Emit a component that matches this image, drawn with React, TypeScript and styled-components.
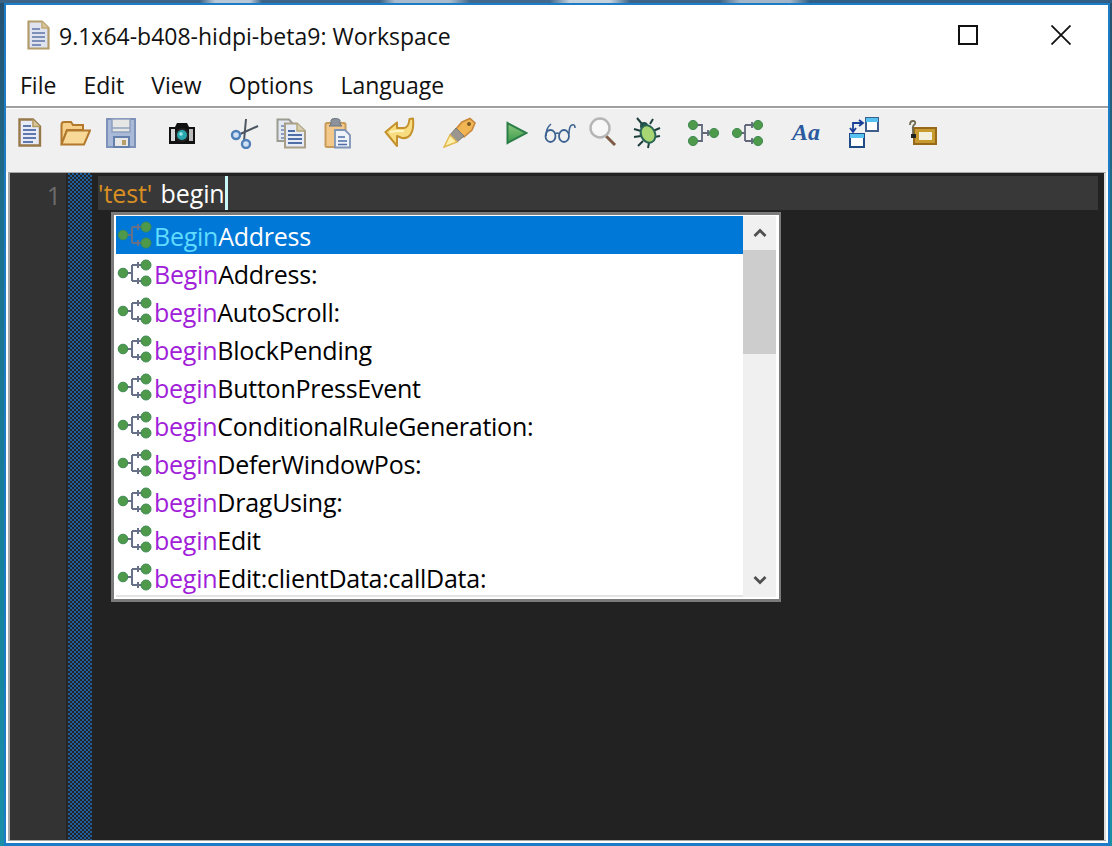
import React from "react";
import styled, { createGlobalStyle } from "styled-components";

const GlobalStyle = createGlobalStyle`
    html, body {
        margin: 0;
        padding: 0;
    }
    body {
        width: 1112px;
        height: 846px;
        overflow: hidden;
        font-family: "Open Sans", "Noto Sans", sans-serif;
    }
`;

const Desktop = styled.div`
    width: 1112px;
    height: 846px;
    box-sizing: border-box;
    padding: 3px 2px 0 4px;
    background:
        linear-gradient(90deg, #3c6488 0 200px, #b9c8d6 215px 250px, #3c6488 262px 380px, #a9bccd 395px 450px, #41698d 470px 550px, #c4d2de 570px 610px, #3c6488 630px 720px, #a2b6c8 740px 790px, #2f5f86 810px 100%) top / 100% 3px no-repeat,
        linear-gradient(180deg, #27506f 0%, #1d6f8c 25%, #16839c 70%, #1a8fa8 100%);
`;

const Win = styled.div`
    height: 843px;
    box-sizing: border-box;
    border: solid #1c7cc6;
    border-width: 2px 2px 3px 2px;
    background: #fff;
    display: flex;
    flex-direction: column;
`;

const TitleBar = styled.div`
    height: 59px;
    display: flex;
    align-items: center;
    padding-left: 21px;
    flex: none;
`;

const TitleText = styled.span`
    margin-left: 9px;
    padding-top: 3px;
    font-size: 23px;
    color: #111;
    white-space: nowrap;
`;

const WinButtons = styled.div`
    margin-left: auto;
    display: flex;
    align-items: center;
    gap: 73px;
    padding-right: 37px;
`;

const MaxBox = styled.div`
    width: 20px;
    height: 20px;
    box-sizing: border-box;
    border: 2px solid #111;
`;

const MenuBar = styled.div`
    height: 42px;
    display: flex;
    align-items: center;
    gap: 27px;
    padding-left: 14px;
    flex: none;
`;

const MenuItem = styled.span`
    font-size: 23px;
    color: #111;
`;

const Toolbar = styled.div`
    height: 66px;
    flex: none;
    box-sizing: border-box;
    background: #f0f0f0;
    border-top: 2px solid #a0a0a0;
    box-shadow: inset 0 1px 0 #fff;
    display: flex;
    align-items: flex-start;
    padding: 9px 0 0 12px;
`;

const Tool = styled.svg<{ $gap?: number }>`
    display: block;
    height: 32px;
    flex: none;
    margin-left: ${p => p.$gap ?? 0}px;
`;

const FontTool = styled.span<{ $gap: number }>`
    width: 30px;
    height: 32px;
    flex: none;
    margin-left: ${p => p.$gap}px;
    font: italic bold 24px/30px "Liberation Serif", serif;
    color: #2b5a9e;
    text-align: center;
`;

const EditorFrame = styled.div`
    flex: 1;
    min-height: 0;
    background: #a8a8a8;
    padding: 1px 0 1px 2px;
    border-bottom: 2px solid #fff;
    border-left: 2px solid #fff;
    border-right: 2px solid #fff;
    display: flex;
`;

const Gutter = styled.div`
    width: 56px;
    flex: none;
    background: #333;
    border-right: 2px solid #262626;
    text-align: right;
    padding-top: 3px;
`;

const LineNo = styled.div`
    height: 34px;
    line-height: 38px;
    padding-right: 5px;
    font-size: 25px;
    color: #6c6c6c;
`;

const FoldMargin = styled.div`
    width: 24px;
    flex: none;
    background-color: #1f5f9e;
    background-image: conic-gradient(#232323 25%, transparent 0 50%, #232323 0 75%, transparent 0);
    background-size: 4px 4px;
`;

const TextArea = styled.div`
    flex: 1;
    position: relative;
    background: #222;
    border-right: 2px solid #ddd;
    padding: 3px 6px 0 6px;
`;

const CurrentLine = styled.div`
    height: 34px;
    background: #383838;
    display: flex;
    align-items: center;
    font-size: 25px;
    letter-spacing: -0.1px;
    white-space: pre;
`;

const StringToken = styled.span`
    color: #d98f22;
`;

const PlainToken = styled.span`
    color: #fff;
    margin-left: 2px;
`;

const Caret = styled.span`
    width: 3px;
    height: 34px;
    background: #c9f7f7;
`;

const Popup = styled.div`
    position: absolute;
    left: 19px;
    top: 39px;
    width: 670px;
    height: 390px;
    box-sizing: border-box;
    border: solid #7b7b7b;
    border-width: 3px 2px 3px 3px;
    background: #fff;
    padding: 1px 4px 2px 2px;
    display: flex;
`;

const List = styled.div`
    width: 627px;
    flex: none;
    overflow: hidden;
    border-bottom: 2px solid #e4e4e4;
`;

const Row = styled.div<{ $selected?: boolean }>`
    height: 38px;
    display: flex;
    align-items: center;
    padding-left: 1px;
    background: ${p => (p.$selected ? "#0078d7" : "#fff")};
    color: ${p => (p.$selected ? "#fff" : "#000")};
    font-size: 25px;
    letter-spacing: -0.25px;
    white-space: nowrap;
`;

const Match = styled.span<{ $selected?: boolean }>`
    color: ${p => (p.$selected ? "#5fdcff" : "#a020d8")};
`;

const RowLabel = styled.span`
    margin-left: 1px;
    padding-top: 2px;
`;

const ScrollBar = styled.div`
    width: 33px;
    flex: none;
    background: #f0f0f0;
    display: flex;
    flex-direction: column;
    align-items: stretch;
`;

const ScrollArrow = styled.div`
    height: 34px;
    flex: none;
    display: flex;
    align-items: center;
    justify-content: center;
`;

const ScrollThumb = styled.div`
    height: 104px;
    flex: none;
    background: #cdcdcd;
`;

const ScrollTrack = styled.div`
    flex: 1;
`;

const PageIcon = ({ gap }: { gap?: number }) => (
    <Tool $gap={gap} width="24" viewBox="0 0 24 32">
        <path d="M1.5 2.5H15L22 9.5V28.5H1.5Z" fill="#e6ebf6" stroke="#97784a" strokeWidth="2.4" />
        <path d="M15 2.5V9.5H22" fill="#d8c79c" stroke="#b59a5f" strokeWidth="1.6" />
        <path d="M5 9H13M5 13H18M5 17H18M5 21H18M5 25H15" stroke="#5f78ad" strokeWidth="1.8" />
    </Tool>
);

const FolderIcon = ({ gap }: { gap?: number }) => (
    <Tool $gap={gap} width="31" viewBox="0 0 31 32">
        <path d="M1.5 27V8Q1.5 5 4 5H11L13 8H23V13H7Z" fill="#f6cf8a" stroke="#b2792c" strokeWidth="2" />
        <path d="M1.5 27.5L7 13.5H30L24 27.5Z" fill="#f9d998" stroke="#b2792c" strokeWidth="2" />
    </Tool>
);

const SaveIcon = ({ gap }: { gap?: number }) => (
    <Tool $gap={gap} width="30" viewBox="0 0 30 32">
        <rect x="1" y="2" width="28" height="28" fill="#a8bad8" stroke="#7d92b8" strokeWidth="2" />
        <rect x="6" y="2" width="18" height="13" fill="#e6e6e4" stroke="#8fa0bf" strokeWidth="1.5" />
        <path d="M6 11H24" stroke="#8fa0bf" strokeWidth="1.5" />
        <rect x="8" y="20" width="15" height="10" fill="#e8e8e6" stroke="#6580ad" strokeWidth="2" />
        <rect x="16" y="23" width="4" height="5" fill="#b9a06a" />
    </Tool>
);

const CameraIcon = ({ gap }: { gap?: number }) => (
    <Tool $gap={gap} width="28" viewBox="0 0 28 32">
        <path d="M1 10H7L9 6H19L21 10H27V27H1Z" fill="#111" />
        <rect x="3" y="12" width="4" height="12" fill="#d8d8d8" />
        <rect x="21" y="12" width="4" height="12" fill="#bbb" />
        <circle cx="14" cy="18" r="7" fill="#222" />
        <circle cx="14" cy="18" r="5" fill="#2aa7ae" />
        <circle cx="13" cy="17" r="1.8" fill="#9fe8ea" />
    </Tool>
);

const ScissorsIcon = ({ gap }: { gap?: number }) => (
    <Tool $gap={gap} width="30" viewBox="0 0 30 32">
        <path d="M8 18L28 9M16 2L14 24" stroke="#4d5560" strokeWidth="2" fill="none" />
        <circle cx="6" cy="18" r="4" fill="#cfe0f5" stroke="#4f7fb8" strokeWidth="2.4" />
        <circle cx="16" cy="27" r="4" fill="#cfe0f5" stroke="#4f7fb8" strokeWidth="2.4" />
    </Tool>
);

const CopyIcon = ({ gap }: { gap?: number }) => (
    <Tool $gap={gap} width="30" viewBox="0 0 30 32">
        <path d="M1.5 2.5H13L17 7V24H1.5Z" fill="#e4e8f2" stroke="#9b9b92" strokeWidth="2" />
        <path d="M5 9H10M5 13H10M5 17H10M5 21H10" stroke="#6d84b0" strokeWidth="1.6" />
        <path d="M9 6.5H21L29 14V30.5H9Z" fill="#e6ebf6" stroke="#a89f86" strokeWidth="2" />
        <path d="M21 6.5V14H29" fill="#d8cfae" stroke="#b5a777" strokeWidth="1.4" />
        <path d="M12 14H19M12 18H26M12 22H26M12 26H26" stroke="#4f6ea6" strokeWidth="1.8" />
    </Tool>
);

const PasteIcon = ({ gap }: { gap?: number }) => (
    <Tool $gap={gap} width="27" viewBox="0 0 27 32">
        <rect x="1.5" y="6" width="20" height="24" rx="1.5" fill="#f2c98a" stroke="#c79c5b" strokeWidth="2" />
        <path d="M7 7V3.5Q7 1.5 11 1.5Q16 1.5 16 3.5V7L18 9H5Z" fill="#8d939c" stroke="#6f757e" strokeWidth="1" />
        <path d="M11 13H21L26 18V30.5H11Z" fill="#eef2f9" stroke="#7f94b4" strokeWidth="1.8" />
        <path d="M14 20H21M14 24H23M14 27.5H23" stroke="#4f6ea6" strokeWidth="1.7" />
    </Tool>
);

const UndoIcon = ({ gap }: { gap?: number }) => (
    <Tool $gap={gap} width="31" viewBox="0 0 31 32">
        <path d="M1.5 15L13 5.5V11H20Q24.5 11 25.5 2L29 1.5Q30.5 16 24 20Q21 21.5 18 21L13 19V29Z" fill="#f8dd80" stroke="#c4912c" strokeWidth="2" strokeLinejoin="round" />
        <path d="M6 15L13 14H20" stroke="#fff4c4" strokeWidth="2" fill="none" />
    </Tool>
);

const BrushIcon = ({ gap }: { gap?: number }) => (
    <Tool $gap={gap} width="33" viewBox="0 0 33 32">
        <path d="M19 5L27 1.5L32 6L29 13L21 20L13 12Z" fill="#f2b554" stroke="#c7873a" strokeWidth="1.6" />
        <circle cx="26" cy="7" r="2" fill="#7a5a24" />
        <path d="M13 11L21 19L14 25L7 18Z" fill="#9b9690" stroke="#7c7770" strokeWidth="1" />
        <path d="M7 18L14 25L1 30Z" fill="#fbf0ae" stroke="#e3b84d" strokeWidth="1.4" />
    </Tool>
);

const RunIcon = ({ gap }: { gap?: number }) => (
    <Tool $gap={gap} width="22" viewBox="0 0 22 32">
        <defs>
            <linearGradient id="runFill" x1="0" y1="0" x2="0" y2="1">
                <stop offset="0" stopColor="#8cc97e" />
                <stop offset="1" stopColor="#3b9a4c" />
            </linearGradient>
        </defs>
        <path d="M1.5 6V26L20.5 16Z" fill="url(#runFill)" stroke="#2d7d48" strokeWidth="2" />
    </Tool>
);

const GlassesIcon = ({ gap }: { gap?: number }) => (
    <Tool $gap={gap} width="32" viewBox="0 0 32 32">
        <path d="M2 19Q2 11 7 7" stroke="#3c6290" strokeWidth="1.6" fill="none" />
        <ellipse cx="6.5" cy="19" rx="5" ry="6" fill="none" stroke="#3c6290" strokeWidth="1.8" />
        <ellipse cx="20" cy="19" rx="5" ry="6" fill="none" stroke="#3c6290" strokeWidth="1.8" />
        <path d="M11 17Q13.5 15 15 17M25 17Q25 9 28 8Q31 7 31 11" stroke="#3c6290" strokeWidth="1.6" fill="none" />
    </Tool>
);

const SearchIcon = ({ gap }: { gap?: number }) => (
    <Tool $gap={gap} width="28" viewBox="0 0 28 32">
        <path d="M17 19L26 28" stroke="#7c5a44" strokeWidth="3" />
        <circle cx="11" cy="11" r="9.5" fill="#f7f7f7" stroke="#b5b5b5" strokeWidth="2.4" />
    </Tool>
);

const BugIcon = ({ gap }: { gap?: number }) => (
    <Tool $gap={gap} width="28" viewBox="0 0 28 32">
        <path d="M4 1L9 7M20 2L17 7M1 12L8 14M27 11L20 14M1 20L8 19M27 19L21 20M5 29L10 24M15 31L16 26" stroke="#1e3f3c" strokeWidth="2" />
        <circle cx="11" cy="9" r="4" fill="#22504a" />
        <ellipse cx="15" cy="17" rx="7" ry="9" transform="rotate(-25 15 17)" fill="#a8d672" stroke="#2a6454" strokeWidth="2" />
    </Tool>
);

const Ball = ({ cx, cy, r = 4.6 }: { cx: number; cy: number; r?: number }) => (
    <circle cx={cx} cy={cy} r={r} fill="#4f9a4a" stroke="#3f8a55" strokeWidth="1" />
);

const MergeIcon = ({ gap }: { gap?: number }) => (
    <Tool $gap={gap} width="31" viewBox="0 0 31 32">
        <path d="M5 8H14V24H5M14 16H26M20 13V19" stroke="#60687a" strokeWidth="1.8" fill="none" />
        <Ball cx={5} cy={8} />
        <Ball cx={5} cy={24} />
        <Ball cx={26} cy={16} />
    </Tool>
);

const SplitIcon = ({ gap }: { gap?: number }) => (
    <Tool $gap={gap} width="31" viewBox="0 0 31 32">
        <path d="M5 16H13M13 8V24M13 8H26M13 24H26M20 5V11M20 21V27" stroke="#60687a" strokeWidth="1.8" fill="none" />
        <Ball cx={5} cy={16} />
        <Ball cx={26} cy={8} />
        <Ball cx={26} cy={24} />
    </Tool>
);

const WindowsIcon = ({ gap }: { gap?: number }) => (
    <Tool $gap={gap} width="30" viewBox="0 0 30 32">
        <rect x="17" y="1" width="12" height="13" fill="#fff" stroke="#3d5d8c" strokeWidth="2" />
        <rect x="17" y="1" width="12" height="4" fill="#55c2f0" />
        <rect x="1" y="17" width="14" height="13" fill="#fff" stroke="#1f4a86" strokeWidth="2" />
        <rect x="1" y="17" width="14" height="4" fill="#55c2f0" />
        <path d="M4 14V6H13M10 3L14 6L10 9M1 11L4 15L7 11" stroke="#1a3f96" strokeWidth="1.8" fill="none" />
    </Tool>
);

const TagIcon = ({ gap }: { gap?: number }) => (
    <Tool $gap={gap} width="29" viewBox="0 0 29 32">
        <rect x="6" y="11" width="22" height="16" fill="#c8992f" stroke="#96691a" strokeWidth="2" />
        <rect x="11" y="15" width="13" height="8" fill="#f3f0df" />
        <path d="M2 8Q2 4 5 4Q8 4 7 7Q4 9 5 13V19" stroke="#6f6a50" strokeWidth="1.8" fill="none" />
        <rect x="3" y="17" width="5" height="4" fill="#222" />
    </Tool>
);

const DocTitleIcon = () => (
    <svg width="23" height="30" viewBox="0 0 23 30">
        <path d="M1.5 1.5H15L21.5 8V28.5H1.5Z" fill="#dfe3f0" stroke="#b49c6a" strokeWidth="2.2" />
        <path d="M15 1.5V8H21.5" fill="#d8c79c" stroke="#c4ab73" strokeWidth="1.5" />
        <path d="M5 9H13M5 13H18M5 17H18M5 21H18M5 25H14" stroke="#7e90b8" strokeWidth="1.8" />
    </svg>
);

const MethodIcon = () => (
    <svg width="36" height="30" viewBox="0 0 36 30" style={{ flex: "none" }}>
        <path d="M5 15H15M15 7V23M15 7H28M15 23H28M21 4V10M21 20V26" stroke="#667086" strokeWidth="2" fill="none" />
        <Ball cx={6} cy={15} r={4.8} />
        <Ball cx={29} cy={7} r={5} />
        <Ball cx={29} cy={23} r={5} />
    </svg>
);

const CloseIcon = () => (
    <svg width="20" height="20" viewBox="0 0 20 20">
        <path d="M0.5 0.5L19.5 19.5M19.5 0.5L0.5 19.5" stroke="#111" strokeWidth="1.8" />
    </svg>
);

const Chevron = ({ down }: { down?: boolean }) => (
    <svg width="14" height="10" viewBox="0 0 14 10">
        <path d={down ? "M1.5 2L7 7.5L12.5 2" : "M1.5 8L7 2.5L12.5 8"} stroke="#505050" strokeWidth="2.8" fill="none" />
    </svg>
);

const items: [string, string][] = [
    ["Begin", "Address"],
    ["Begin", "Address:"],
    ["begin", "AutoScroll:"],
    ["begin", "BlockPending"],
    ["begin", "ButtonPressEvent"],
    ["begin", "ConditionalRuleGeneration:"],
    ["begin", "DeferWindowPos:"],
    ["begin", "DragUsing:"],
    ["begin", "Edit"],
    ["begin", "Edit:clientData:callData:"],
];

const menus = ["File", "Edit", "View", "Options", "Language"];

const App = () => (
    <Desktop>
        <GlobalStyle />
        <Win>
            <TitleBar>
                <DocTitleIcon />
                <TitleText>9.1x64-b408-hidpi-beta9: Workspace</TitleText>
                <WinButtons>
                    <MaxBox />
                    <CloseIcon />
                </WinButtons>
            </TitleBar>
            <MenuBar>
                {menus.map(m => <MenuItem key={m}>{m}</MenuItem>)}
            </MenuBar>
            <Toolbar>
                <PageIcon />
                <FolderIcon gap={18} />
                <SaveIcon gap={15} />
                <CameraIcon gap={32} />
                <ScissorsIcon gap={34} />
                <CopyIcon gap={16} />
                <PasteIcon gap={18} />
                <UndoIcon gap={33} />
                <BrushIcon gap={28} />
                <RunIcon gap={30} />
                <GlassesIcon gap={16} />
                <SearchIcon gap={13} />
                <BugIcon gap={16} />
                <MergeIcon gap={27} />
                <SplitIcon gap={13} />
                <FontTool $gap={28}>Aa</FontTool>
                <WindowsIcon gap={28} />
                <TagIcon gap={29} />
            </Toolbar>
            <EditorFrame>
                <Gutter>
                    <LineNo>1</LineNo>
                </Gutter>
                <FoldMargin />
                <TextArea>
                    <CurrentLine>
                        <StringToken>'test'</StringToken>
                        <PlainToken> begin</PlainToken>
                        <Caret />
                    </CurrentLine>
                    <Popup>
                        <List>
                            {items.map(([head, tail], i) => (
                                <Row key={head + tail} $selected={i === 0}>
                                    <MethodIcon />
                                    <RowLabel>
                                        <Match $selected={i === 0}>{head}</Match>{tail}
                                    </RowLabel>
                                </Row>
                            ))}
                        </List>
                        <ScrollBar>
                            <ScrollArrow><Chevron /></ScrollArrow>
                            <ScrollThumb />
                            <ScrollTrack />
                            <ScrollArrow><Chevron down /></ScrollArrow>
                        </ScrollBar>
                    </Popup>
                </TextArea>
            </EditorFrame>
        </Win>
    </Desktop>
);

export default App;
